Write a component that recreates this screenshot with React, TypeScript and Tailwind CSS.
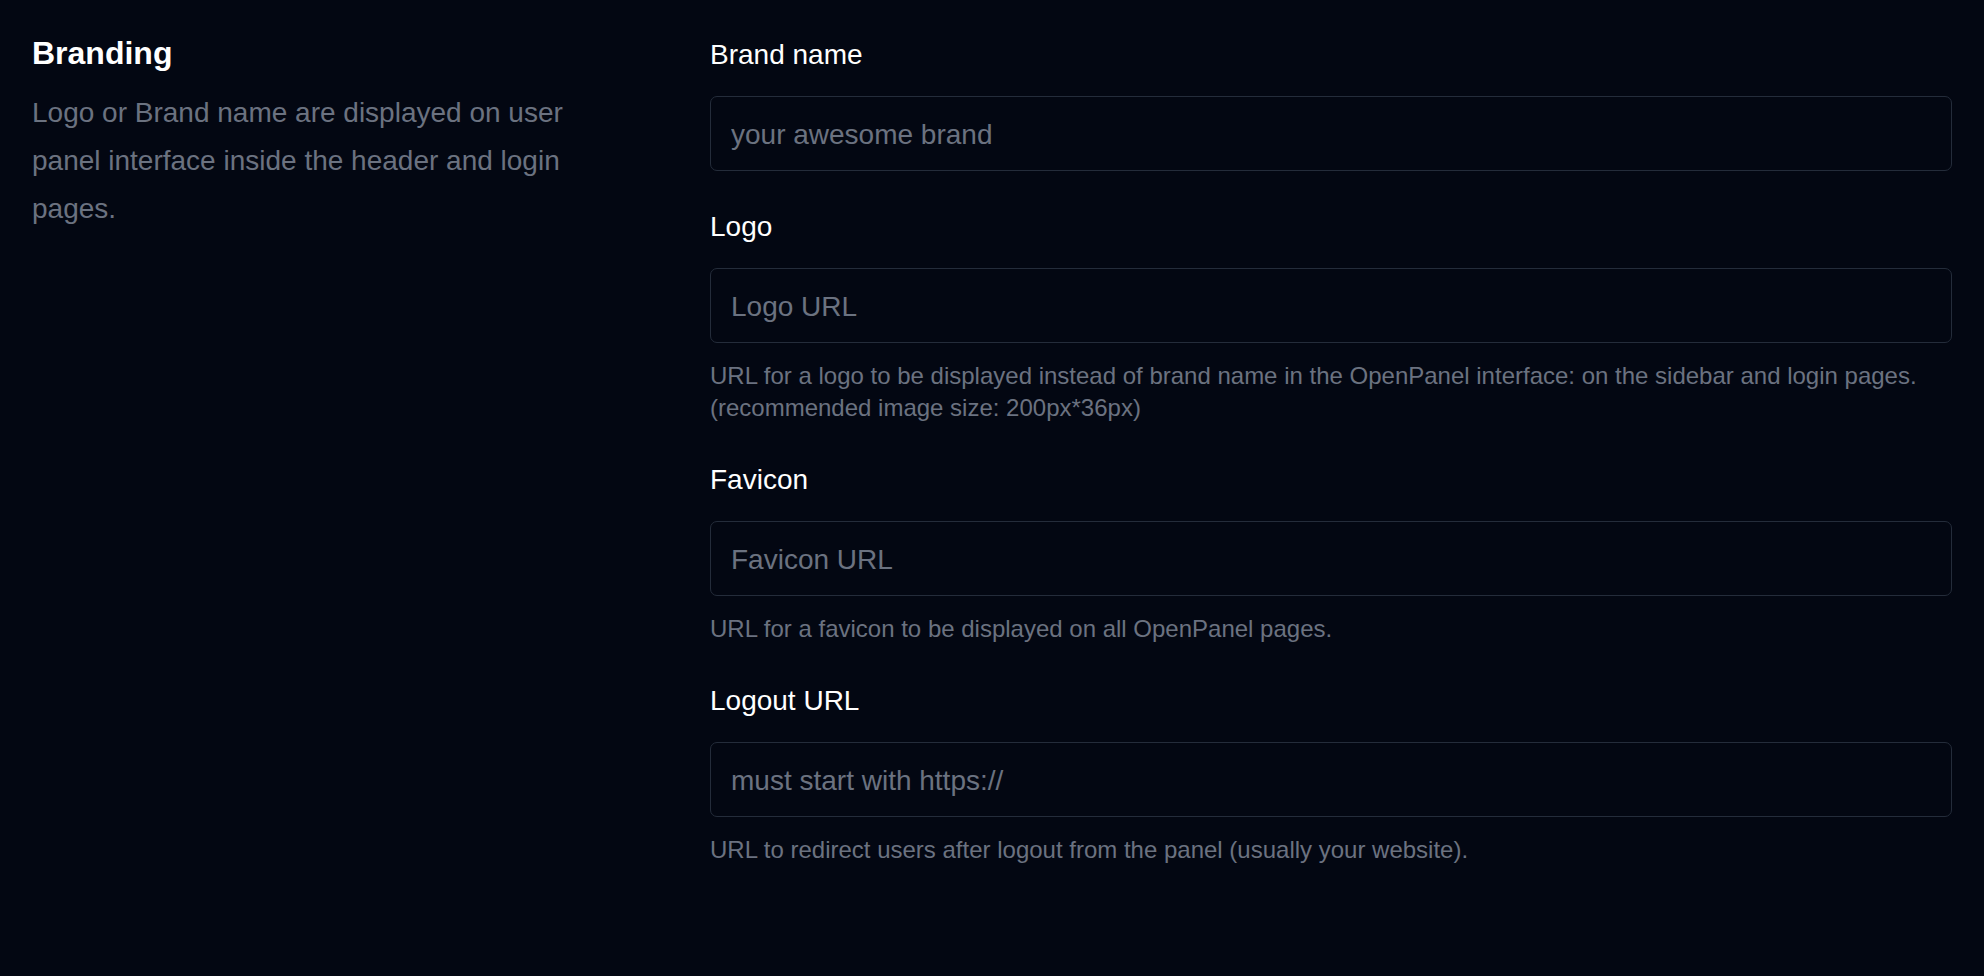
import { useState } from "react";

type Field = {
  id: string;
  label: string;
  placeholder: string;
  help?: string[];
};

const fields: Field[] = [
  { id: "brand_name", label: "Brand name", placeholder: "your awesome brand" },
  {
    id: "logo",
    label: "Logo",
    placeholder: "Logo URL",
    help: [
      "URL for a logo to be displayed instead of brand name in the OpenPanel interface: on the sidebar and login pages.",
      "(recommended image size: 200px*36px)",
    ],
  },
  {
    id: "favicon",
    label: "Favicon",
    placeholder: "Favicon URL",
    help: ["URL for a favicon to be displayed on all OpenPanel pages."],
  },
  {
    id: "logout_url",
    label: "Logout URL",
    placeholder: "must start with https://",
    help: ["URL to redirect users after logout from the panel (usually your website)."],
  },
];

export default function App() {
  const [values, setValues] = useState<Record<string, string>>({});

  return (
    <div className="min-h-screen bg-[#030712] font-['Liberation_Sans',Arial,sans-serif] pt-8 pl-8 pr-8">
      <div className="grid grid-cols-[678px_1fr]">
        {/* Section intro */}
        <div className="pr-[100px]">
          <h2 className="text-[32px] leading-[42px] font-bold text-white">Branding</h2>
          <p className="mt-[15px] text-[28px] leading-[48px] text-[#6b7280]">
            Logo or Brand name are displayed on user panel interface inside the header and login pages.
          </p>
        </div>

        {/* Form fields */}
        <div className="flex flex-col gap-[33px]">
          {fields.map((f) => (
            <div key={f.id} className="flex flex-col">
              <label htmlFor={f.id} className="pt-[2px] text-[28px] leading-[42px] text-white">
                {f.label}
              </label>
              <input
                id={f.id}
                type="text"
                value={values[f.id] ?? ""}
                onChange={(e) => setValues({ ...values, [f.id]: e.target.value })}
                placeholder={f.placeholder}
                className="mt-[20px] h-[75px] w-full rounded-[7px] border border-[#242c3a] bg-transparent pt-[2px] pl-[20px] pr-4 text-[28px] text-white placeholder:text-[#6b7280] outline-none"
              />
              {f.help && (
                <div className="mt-[17px] text-[24px] leading-[32px] text-[#6b7280]">
                  {f.help.map((line) => (
                    <p key={line}>{line}</p>
                  ))}
                </div>
              )}
            </div>
          ))}
        </div>
      </div>
    </div>
  );
}
